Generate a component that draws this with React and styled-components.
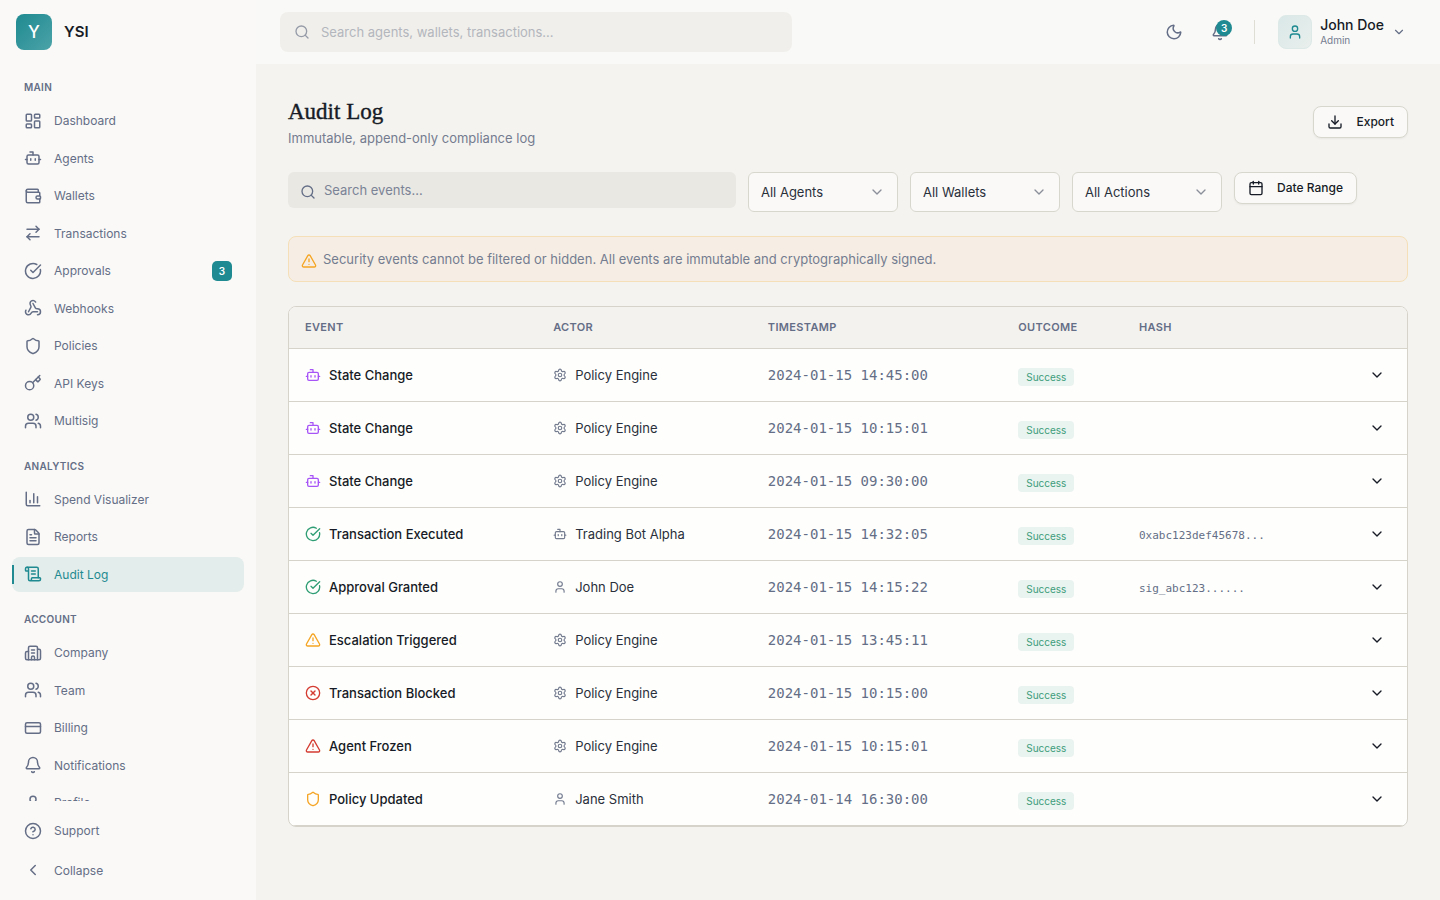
import React from "react";
import styled, { createGlobalStyle, css } from "styled-components";
import {
  ArrowRightLeft,
  Bell,
  Bot,
  Building2,
  Calendar,
  ChartColumn,
  ChevronDown,
  ChevronLeft,
  CircleCheckBig,
  CircleQuestionMark,
  CircleX,
  CreditCard,
  Download,
  FileText,
  Key,
  LayoutDashboard,
  Moon,
  ScrollText,
  Search,
  Settings,
  Shield,
  TriangleAlert,
  User,
  Users,
  Wallet,
  Webhook
} from "lucide-react";

const GlobalStyle = createGlobalStyle`
  *, *::before, *::after {
    box-sizing: border-box;
  }
  body {
    margin: 0;
    background: #f4f3ef;
    color: #161b26;
    font-family: Inter, "Liberation Sans", sans-serif;
    font-size: 13px;
    line-height: 20px;
  }
  button, input, select {
    font: inherit;
    color: inherit;
  }
  h1, h2, p, ul {
    margin: 0;
    padding: 0;
  }
  a {
    color: inherit;
    text-decoration: none;
  }
  svg {
    flex-shrink: 0;
    display: block;
  }
`;

const Shell = styled.div`
  display: grid;
  grid-template-columns: 256px minmax(0, 1fr);
  height: 100vh;
`;

const Sidebar = styled.aside`
  display: flex;
  flex-direction: column;
  min-height: 0;
  background: #faf9f7;
`;

const Brand = styled.a`
  display: flex;
  align-items: center;
  gap: 12px;
  height: 64px;
  padding: 0 16px;
  flex-shrink: 0;
`;

const Logo = styled.span`
  display: grid;
  place-items: center;
  width: 36px;
  height: 36px;
  border-radius: 8px;
  background: linear-gradient(135deg, #1f8a91, #4ba3a8);
  color: #fff;
  font-size: 17px;
  font-weight: 500;
`;

const BrandName = styled.span`
  font-size: 15px;
  font-weight: 600;
`;

const Nav = styled.nav`
  flex: 1;
  min-height: 0;
  overflow-y: auto;
  padding: 15px 12px 0;
  scrollbar-width: none;
`;

const NavTitle = styled.h2`
  padding: 0 12px 8px;
  color: #646e86;
  font-size: 10px;
  font-weight: 600;
  line-height: 16px;
  letter-spacing: 0.03em;
  text-transform: uppercase;
`;

const NavList = styled.ul`
  display: flex;
  flex-direction: column;
  gap: 2px;
  margin-bottom: 19px;
  list-style: none;
`;

const activeLink = css`
  background: #e3edeb;
  color: #1f8a91;

  &::before {
    content: "";
    position: absolute;
    left: 0;
    top: 8px;
    bottom: 8px;
    width: 2px;
    background: #1f8a91;
  }
`;

const navRow = css`
  display: flex;
  align-items: center;
  gap: 12px;
  padding: 8px 12px;
  color: #646e86;
  font-size: 12px;
  line-height: 1.625;
`;

const NavLink = styled.a`
  ${navRow}
  position: relative;
  border-radius: 8px;
  ${({ $active }) => $active && activeLink}
`;

const NavBadge = styled.span`
  width: 20px;
  height: 20px;
  margin: -2px 0 -2px auto;
  border-radius: 5px;
  background: #1f8a91;
  color: #fff;
  font-size: 10px;
  font-weight: 600;
  line-height: 20px;
  text-align: center;
`;

const SidebarFooter = styled.div`
  display: flex;
  flex-direction: column;
  gap: 4px;
  padding: 12px;
  flex-shrink: 0;
`;

const CollapseButton = styled.button`
  ${navRow}
  border: 0;
  background: none;
`;

const Page = styled.div`
  display: flex;
  flex-direction: column;
  min-width: 0;
`;

const TopBar = styled.header`
  display: flex;
  align-items: center;
  justify-content: space-between;
  height: 64px;
  padding: 0 32px 0 24px;
  flex-shrink: 0;
  background: #f9f9f7;
`;

const SearchBox = styled.label`
  display: flex;
  align-items: center;
  gap: 11px;
  width: 512px;
  height: 40px;
  padding: 0 14px;
  border-radius: 8px;
  background: #f0efeb;
  color: #969ba8;
`;

const EventSearch = styled(SearchBox)`
  flex: 0 1 448px;
  gap: 8px;
  height: 36px;
  padding: 0 12px;
  border-radius: 6px;
  background: #e9e8e3;
  color: #646e86;

  > svg {
    margin-top: 4px;
  }
`;

const SearchInput = styled.input`
  flex: 1;
  min-width: 0;
  padding: 0;
  border: 0;
  outline: 0;
  background: none;

  &::placeholder {
    color: ${({ $faint }) => ($faint ? "#b3b6bd" : "#7b8396")};
    opacity: 1;
  }
`;

const TopActions = styled.div`
  display: flex;
  align-items: center;
  gap: 10px;
`;

const IconButton = styled.button`
  position: relative;
  display: grid;
  place-items: center;
  width: 36px;
  height: 36px;
  padding: 0;
  border: 0;
  background: none;
  color: #646e86;
`;

const Count = styled.span`
  position: absolute;
  top: 6px;
  right: 6px;
  width: 16px;
  height: 16px;
  border-radius: 8px;
  background: #1f8a91;
  color: #fff;
  font-size: 10px;
  font-weight: 600;
  line-height: 16px;
`;

const Divider = styled.span`
  width: 1px;
  height: 24px;
  margin: 0 13px 0 6px;
  background: #dfded5;
`;

const Profile = styled.button`
  display: flex;
  align-items: center;
  gap: 8px;
  padding: 0 2px 0 0;
  border: 0;
  background: none;
  color: #646e86;
  text-align: left;
`;

const Avatar = styled.span`
  display: grid;
  place-items: center;
  width: 34px;
  height: 34px;
  border: 1px solid #dce9e7;
  border-radius: 8px;
  background: linear-gradient(135deg, #d9e8e7, #e9efed);
  color: #1f8a91;
`;

const ProfileText = styled.span`
  display: flex;
  flex-direction: column;
`;

const ProfileName = styled.span`
  color: #161b26;
  font-size: 14px;
  font-weight: 500;
  line-height: 16px;
`;

const ProfileRole = styled.span`
  color: #747c90;
  font-size: 10px;
  line-height: 14px;
`;

const Content = styled.main`
  display: flex;
  flex-direction: column;
  gap: 24px;
  padding: 32px;
`;

const PageHead = styled.div`
  display: flex;
  align-items: center;
  justify-content: space-between;
`;

const Title = styled.h1`
  font-family: "Liberation Serif", serif;
  font-size: 23px;
  font-weight: 400;
  line-height: 32px;
  -webkit-text-stroke: 0.4px;
`;

const Subtitle = styled.p`
  color: #747c90;
`;

const Button = styled.button`
  display: flex;
  align-items: center;
  gap: 13px;
  height: 32px;
  padding: 0 13px;
  border: 1px solid #d8d7ce;
  border-radius: 8px;
  background: #faf9f7;
  box-shadow: 0 1px 2px rgba(0, 0, 0, 0.05);
  font-size: 12px;
  font-weight: 500;
`;

const Filters = styled.div`
  display: flex;
  align-items: flex-start;
  gap: 12px;
`;

const SelectWrap = styled.div`
  display: grid;
  align-items: center;
  width: 150px;
  height: 40px;
  color: #8a8f9a;

  > * {
    grid-area: 1 / 1;
  }
  > svg {
    justify-self: end;
    margin-right: 13px;
    pointer-events: none;
  }
`;

const Select = styled.select`
  width: 100%;
  height: 40px;
  padding: 0 12px;
  appearance: none;
  border: 1px solid #d8d7ce;
  border-radius: 6px;
  background: #faf9f7;
  color: #2a303b;
`;

const Notice = styled.div`
  display: flex;
  align-items: center;
  gap: 6px;
  height: 46px;
  padding: 0 12px;
  border: 1px solid #f5dfb8;
  border-radius: 8px;
  background: #f6eee4;
  color: #747c90;

  > svg {
    margin-top: 4px;
    color: #f5a524;
  }
`;

const TableCard = styled.div`
  overflow: hidden;
  border: 1px solid #d5d3ca;
  border-radius: 8px;
  background: #fefefc;
`;

const Table = styled.table`
  width: 100%;
  border-collapse: separate;
  border-spacing: 0;
  table-layout: fixed;
`;

const Th = styled.th`
  width: ${({ $width }) => $width};
  height: 42px;
  padding: 0 16px 2px;
  border-bottom: 1px solid #d5d3ca;
  background: #f4f2ef;
  color: #646e86;
  font-size: 11px;
  font-weight: 600;
  letter-spacing: 0.03em;
  text-align: left;
  text-transform: uppercase;
`;

const Td = styled.td`
  height: 53px;
  padding: 0 16px;
  border-bottom: 1px solid #d5d3ca;
`;

const Cell = styled.div`
  display: flex;
  align-items: center;
  gap: 8px;
  color: ${({ $muted }) => ($muted ? "#2a303b" : "#161b26")};
  font-weight: ${({ $muted }) => ($muted ? 400 : 500)};
  white-space: nowrap;

  > svg {
    color: ${({ $tone }) => $tone || "#747c90"};
  }
`;

const Timestamp = styled.time`
  color: #646e86;
  font-family: "DejaVu Sans Mono", monospace;
  font-size: 14px;
`;

const Outcome = styled.span`
  display: inline-block;
  margin-top: 4px;
  padding: 0 8px;
  border-radius: 4px;
  background: #e9f3ef;
  color: #3d9d7b;
  font-size: 10px;
  line-height: 18px;
`;

const Hash = styled.code`
  display: block;
  padding-top: 4px;
  color: #646e86;
  font-family: "DejaVu Sans Mono", monospace;
  font-size: 11px;
`;

const ExpandButton = styled.button`
  display: grid;
  place-items: center;
  width: 28px;
  height: 28px;
  margin-left: auto;
  padding: 0;
  border: 0;
  background: none;
`;

const sections = [
  {
    title: "Main",
    items: [
      { label: "Dashboard", icon: LayoutDashboard },
      { label: "Agents", icon: Bot },
      { label: "Wallets", icon: Wallet },
      { label: "Transactions", icon: ArrowRightLeft },
      { label: "Approvals", icon: CircleCheckBig, badge: 3 },
      { label: "Webhooks", icon: Webhook },
      { label: "Policies", icon: Shield },
      { label: "API Keys", icon: Key },
      { label: "Multisig", icon: Users }
    ]
  },
  {
    title: "Analytics",
    items: [
      { label: "Spend Visualizer", icon: ChartColumn },
      { label: "Reports", icon: FileText },
      { label: "Audit Log", icon: ScrollText, active: true }
    ]
  },
  {
    title: "Account",
    items: [
      { label: "Company", icon: Building2 },
      { label: "Team", icon: Users },
      { label: "Billing", icon: CreditCard },
      { label: "Notifications", icon: Bell },
      { label: "Profile", icon: User }
    ]
  }
];

const eventTypes = {
  "State Change": { icon: Bot, tone: "#a855f7" },
  "Transaction Executed": { icon: CircleCheckBig, tone: "#2f9e75" },
  "Approval Granted": { icon: CircleCheckBig, tone: "#2f9e75" },
  "Escalation Triggered": { icon: TriangleAlert, tone: "#f5a524" },
  "Transaction Blocked": { icon: CircleX, tone: "#d43c32" },
  "Agent Frozen": { icon: TriangleAlert, tone: "#d43c32" },
  "Policy Updated": { icon: Shield, tone: "#f5a524" }
};

const actorIcons = { system: Settings, agent: Bot, user: User };

const events = [
  { event: "State Change", kind: "system", actor: "Policy Engine", time: "2024-01-15 14:45:00" },
  { event: "State Change", kind: "system", actor: "Policy Engine", time: "2024-01-15 10:15:01" },
  { event: "State Change", kind: "system", actor: "Policy Engine", time: "2024-01-15 09:30:00" },
  { event: "Transaction Executed", kind: "agent", actor: "Trading Bot Alpha", time: "2024-01-15 14:32:05", hash: "0xabc123def45678..." },
  { event: "Approval Granted", kind: "user", actor: "John Doe", time: "2024-01-15 14:15:22", hash: "sig_abc123......" },
  { event: "Escalation Triggered", kind: "system", actor: "Policy Engine", time: "2024-01-15 13:45:11" },
  { event: "Transaction Blocked", kind: "system", actor: "Policy Engine", time: "2024-01-15 10:15:00" },
  { event: "Agent Frozen", kind: "system", actor: "Policy Engine", time: "2024-01-15 10:15:01" },
  { event: "Policy Updated", kind: "user", actor: "Jane Smith", time: "2024-01-14 16:30:00" }
];

const NavItem = ({ label, icon: Icon, badge, active }) => (
  <NavLink href="#" $active={active} aria-current={active ? "page" : undefined}>
    <Icon size={18} />
    {label}
    {badge && <NavBadge>{badge}</NavBadge>}
  </NavLink>
);

const FilterSelect = ({ label, name }) => (
  <SelectWrap>
    <Select aria-label={name}>
      <option>{label}</option>
    </Select>
    <ChevronDown size={16} />
  </SelectWrap>
);

const EventRow = ({ event, kind, actor, time, hash }) => {
  const { icon: EventIcon, tone } = eventTypes[event];
  const ActorIcon = actorIcons[kind];
  return (
    <tr>
      <Td>
        <Cell $tone={tone}>
          <EventIcon size={16} />
          {event}
        </Cell>
      </Td>
      <Td>
        <Cell $muted>
          <ActorIcon size={14} />
          {actor}
        </Cell>
      </Td>
      <Td>
        <Timestamp>{time}</Timestamp>
      </Td>
      <Td>
        <Outcome>Success</Outcome>
      </Td>
      <Td>{hash && <Hash>{hash}</Hash>}</Td>
      <Td>
        <ExpandButton aria-label={`Show details of ${event}`}>
          <ChevronDown size={16} />
        </ExpandButton>
      </Td>
    </tr>
  );
};

const App = () => (
  <>
    <GlobalStyle />
    <Shell>
      <Sidebar>
        <Brand href="#">
          <Logo>Y</Logo>
          <BrandName>YSI</BrandName>
        </Brand>
        <Nav>
          {sections.map(({ title, items }) => (
            <React.Fragment key={title}>
              <NavTitle>{title}</NavTitle>
              <NavList>
                {items.map(item => (
                  <li key={item.label}>
                    <NavItem {...item} />
                  </li>
                ))}
              </NavList>
            </React.Fragment>
          ))}
        </Nav>
        <SidebarFooter>
          <NavItem label="Support" icon={CircleQuestionMark} />
          <CollapseButton>
            <ChevronLeft size={18} />
            Collapse
          </CollapseButton>
        </SidebarFooter>
      </Sidebar>
      <Page>
        <TopBar>
          <SearchBox>
            <Search size={16} />
            <SearchInput
              $faint
              aria-label="Search"
              placeholder="Search agents, wallets, transactions..."
            />
          </SearchBox>
          <TopActions>
            <IconButton aria-label="Toggle theme">
              <Moon size={18} />
            </IconButton>
            <IconButton aria-label="Notifications">
              <Bell size={18} />
              <Count>3</Count>
            </IconButton>
            <Divider />
            <Profile>
              <Avatar>
                <User size={16} />
              </Avatar>
              <ProfileText>
                <ProfileName>John Doe</ProfileName>
                <ProfileRole>Admin</ProfileRole>
              </ProfileText>
              <ChevronDown size={14} />
            </Profile>
          </TopActions>
        </TopBar>
        <Content>
          <PageHead>
            <div>
              <Title>Audit Log</Title>
              <Subtitle>Immutable, append-only compliance log</Subtitle>
            </div>
            <Button>
              <Download size={16} />
              Export
            </Button>
          </PageHead>
          <Filters>
            <EventSearch>
              <Search size={16} />
              <SearchInput aria-label="Search events" placeholder="Search events..." />
            </EventSearch>
            <FilterSelect name="Agent" label="All Agents" />
            <FilterSelect name="Wallet" label="All Wallets" />
            <FilterSelect name="Action" label="All Actions" />
            <Button>
              <Calendar size={16} />
              Date Range
            </Button>
          </Filters>
          <Notice>
            <TriangleAlert size={16} />
            <p>
              Security events cannot be filtered or hidden. All events are immutable and
              cryptographically signed.
            </p>
          </Notice>
          <TableCard>
            <Table>
              <thead>
                <tr>
                  <Th $width="22.2%">Event</Th>
                  <Th $width="19.2%">Actor</Th>
                  <Th $width="22.4%">Timestamp</Th>
                  <Th $width="10.8%">Outcome</Th>
                  <Th>Hash</Th>
                  <Th $width="7%" aria-label="Details" />
                </tr>
              </thead>
              <tbody>
                {events.map(row => (
                  <EventRow key={row.event + row.time} {...row} />
                ))}
              </tbody>
            </Table>
          </TableCard>
        </Content>
      </Page>
    </Shell>
  </>
);

export default App;
